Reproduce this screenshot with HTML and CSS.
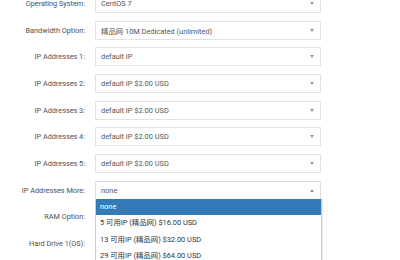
FILE: index.html
```html
<!DOCTYPE html>
<html lang="en">
<head>
    <meta charset="UTF-8">
    <title>Configure Server</title>
    <link rel="stylesheet" href="styles.css">
</head>
<body>
    <div class="config">
        <div class="row">
            <label class="label">Operating System:</label>
            <div class="select"><span>CentOS 7</span><i class="arrow"></i></div>
        </div>
        <div class="row">
            <label class="label">Bandwidth Option:</label>
            <div class="select"><span>精品网 10M Dedicated (unlimited)</span><i class="arrow"></i></div>
        </div>
        <div class="row">
            <label class="label">IP Addresses 1:</label>
            <div class="select"><span>default IP</span><i class="arrow"></i></div>
        </div>
        <div class="row">
            <label class="label">IP Addresses 2:</label>
            <div class="select"><span>default IP $2.00 USD</span><i class="arrow"></i></div>
        </div>
        <div class="row">
            <label class="label">IP Addresses 3:</label>
            <div class="select"><span>default IP $2.00 USD</span><i class="arrow"></i></div>
        </div>
        <div class="row">
            <label class="label">IP Addresses 4:</label>
            <div class="select"><span>default IP $2.00 USD</span><i class="arrow"></i></div>
        </div>
        <div class="row">
            <label class="label">IP Addresses 5:</label>
            <div class="select"><span>default IP $2.00 USD</span><i class="arrow"></i></div>
        </div>
        <div class="row">
            <label class="label">IP Addresses More:</label>
            <div class="select open">
                <span>none</span><i class="arrow up"></i>
                <ul class="dropdown">
                    <li class="active">none</li>
                    <li>5 可用IP (精品网) $16.00 USD</li>
                    <li>13 可用IP (精品网) $32.00 USD</li>
                    <li>29 可用IP (精品网) $64.00 USD</li>
                </ul>
            </div>
        </div>
        <!-- these two rows sit under the open list -->
        <div class="row">
            <label class="label">RAM Option:</label>
            <div class="select"></div>
        </div>
        <div class="row">
            <label class="label">Hard Drive 1(OS):</label>
            <div class="select"></div>
        </div>
    </div>
</body>
</html>
```

FILE: styles.css
```css
* {
    margin: 0;
    padding: 0;
    box-sizing: border-box;
    font-family: Roboto, "Noto Sans CJK SC", sans-serif;
}

body {
    background-color: #ffffff;
    overflow: hidden;
    height: 260px;
}

.config {
    margin-top: -10px;
    width: 400px;
}

.row {
    display: flex;
    align-items: center;
    height: 26.7px;
}

.label {
    width: 85px;
    text-align: right;
    font-size: 7.3px;
    color: #505050;
    margin-right: 10px;
}

.select {
    position: relative;
    width: 226px;
    height: 19px;
    border: 1px solid #e2e2e2;
    background-color: #ffffff;
    display: flex;
    align-items: center;
    padding-left: 5px;
    font-size: 7.4px;
    color: #555555;
}

.select span {
    flex: 1;
}

.arrow {
    width: 0;
    height: 0;
    margin-right: 6px;
    border-left: 2.5px solid transparent;
    border-right: 2.5px solid transparent;
    border-top: 3px solid #999999;
}

.arrow.up {
    border-top: none;
    border-bottom: 3px solid #999999;
}

.select.open {
    border-color: #dddddd;
    z-index: 2;
}

.dropdown {
    position: absolute;
    top: 17.5px;
    left: -1px;
    width: 227px;
    list-style: none;
    background-color: #ffffff;
    border-left: 1px solid #cccccc;
    border-right: 1px solid #cccccc;
    box-shadow: 1px 0 1px rgba(0, 0, 0, 0.08);
}

.dropdown li {
    height: 16.2px;
    line-height: 16.2px;
    padding-left: 4px;
    font-size: 7.4px;
    color: #333333;
}

.dropdown li.active {
    background-color: #337ab7;
    color: #ffffff;
}
```
